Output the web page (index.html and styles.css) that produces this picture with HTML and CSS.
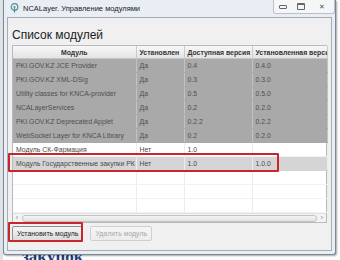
FILE: index.html
```html
<!DOCTYPE html>
<html lang="ru">
<head>
    <meta charset="UTF-8">
    <title>NCALayer. Управление модулями</title>
    <link rel="stylesheet" href="styles.css">
</head>
<body>
    <div class="desk">
        <div class="window">
            <div class="titlebar">
                <svg class="app-icon" width="9" height="10" viewBox="0 0 9 10">
                    <circle cx="4.5" cy="4" r="3.3" fill="none" stroke="#4f8f9a" stroke-width="1.2"/>
                    <circle cx="4.5" cy="4" r="1.1" fill="#4f8f9a"/>
                    <path d="M4.5 5 L4.5 9.5" stroke="#4f8f9a" stroke-width="1.2"/>
                </svg>
                <span class="title">NCALayer. Управление модулями</span>
                <div class="controls">
                    <span class="ctl ctl-min"></span>
                    <span class="ctl ctl-max"></span>
                    <span class="ctl ctl-close">&#x2715;</span>
                </div>
            </div>
            <div class="client">
                <h1>Список модулей</h1>
                <div class="grid">
                    <table>
                        <colgroup>
                            <col class="c1"><col class="c2"><col class="c3"><col class="c4">
                        </colgroup>
                        <thead>
                            <tr><th>Модуль</th><th>Установлен</th><th>Доступная версия</th><th>Установленная версия</th></tr>
                        </thead>
                        <tbody>
                            <tr class="sys"><td>PKI.GOV.KZ JCE Provider</td><td>Да</td><td>0.4</td><td>0.4.0</td></tr>
                            <tr class="sys"><td>PKI.GOV.KZ XML-DSig</td><td>Да</td><td>0.3</td><td>0.3.0</td></tr>
                            <tr class="sys"><td>Utility classes for KNCA-provider</td><td>Да</td><td>0.5</td><td>0.5.0</td></tr>
                            <tr class="sys"><td>NCALayerServices</td><td>Да</td><td>0.2</td><td>0.2.0</td></tr>
                            <tr class="sys"><td>PKI.GOV.KZ Deprecated Applet</td><td>Да</td><td>0.2.2</td><td>0.2.2</td></tr>
                            <tr class="sys"><td>WebSocket Layer for KNCA Library</td><td>Да</td><td>0.2</td><td>0.2.0</td></tr>
                            <tr><td>Модуль СК-Фармация</td><td>Нет</td><td>1.0</td><td></td></tr>
                            <tr class="selected"><td>Модуль Государственные закупки РК</td><td>Нет</td><td>1.0</td><td>1.0.0</td></tr>
                            <tr class="empty"><td></td><td></td><td></td><td></td></tr>
                            <tr class="empty"><td></td><td></td><td></td><td></td></tr>
                            <tr class="empty"><td></td><td></td><td></td><td></td></tr>
                        </tbody>
                    </table>
                    <div class="hscroll">
                        <span class="arrow">&lsaquo;</span>
                        <span class="thumb"></span>
                        <span class="arrow">&rsaquo;</span>
                    </div>
                </div>
                <div class="actions">
                    <button class="btn">Установить модуль</button>
                    <button class="btn" disabled>Удалить модуль</button>
                </div>
            </div>
        </div>
        <div class="under">закупок</div>

        <!-- red annotation frames -->
        <div class="mark mark-row"></div>
        <div class="mark mark-btn"></div>
    </div>
</body>
</html>
```

FILE: styles.css
```css
body {
    margin: 0;
    font-family: 'Liberation Sans', Arial, sans-serif;
    background: #ffffff;
}

.desk {
    position: relative;
    width: 340px;
    height: 260px;
    overflow: hidden;
    background: linear-gradient(to right, #dfe3e8 0, #dfe3e8 3px, #ffffff 3px);
}

.window {
    position: relative;
    z-index: 1;
    width: 331px;
    margin-left: 3px;
    border: 1px solid #7d8792;
    border-top: none;
    border-radius: 0 0 3px 3px;
    background: #e9eef4;
    box-shadow: 1px 1px 2px rgba(0, 0, 0, 0.35);
}

.titlebar {
    display: flex;
    align-items: center;
    height: 16px;
    padding-left: 6px;
}

.app-icon {
    margin-right: 4px;
}

.title {
    font-size: 7.5px;
    color: #222;
}

.controls {
    display: flex;
    align-items: center;
    margin-left: auto;
    height: 13px;
    align-self: flex-start;
    border: 1px solid #b8c0c8;
    border-top: none;
    border-radius: 0 0 3px 3px;
    background: #f4f6f8;
}

.ctl {
    display: flex;
    align-items: center;
    justify-content: center;
    width: 18px;
    height: 13px;
    color: #555;
    font-size: 7px;
}

.ctl-close {
    width: 24px;
}

.ctl-min::before {
    content: "";
    width: 6px;
    height: 2px;
    border: 1px solid #666;
    border-radius: 1px;
}

.ctl-max::before {
    content: "";
    width: 6px;
    height: 4px;
    border: 1px solid #666;
    border-top-width: 2px;
    border-radius: 1px;
}

.client {
    margin: 1px 3px 3px 3px;
    border: 1px solid #a4acb5;
    background: #f0f0f0;
    padding: 0 4px 9px 4px;
}

h1 {
    margin: 10px 0 3px 0;
    font-size: 12px;
    line-height: 14px;
    font-weight: normal;
    color: #222;
}

.grid {
    border: 1px solid #b9b9b9;
    background: #fff;
}

table {
    width: 314px;
    table-layout: fixed;
    border-collapse: collapse;
    font-size: 6.9px;
}

.c1 { width: 123px; }
.c2 { width: 48px; }
.c3 { width: 68px; }
.c4 { width: 75px; }

th {
    height: 12px;
    padding: 0 3px;
    font-weight: bold;
    color: #333;
    white-space: nowrap;
    overflow: hidden;
    text-overflow: clip;
    background: linear-gradient(#f7f7f7, #e4e4e4);
    border-right: 1px solid #c9c9c9;
    border-bottom: 1px solid #c4c4c4;
}

th:nth-child(2),
th:nth-child(4) {
    text-align: left;
}

td {
    height: 13px;
    padding: 0 3px;
    color: #4a4a4a;
    white-space: nowrap;
    overflow: hidden;
    border-right: 1px solid #ececec;
    border-bottom: 1px solid #f1f1f1;
}

tr.sys td {
    background: #a9a9a9;
    color: #4f4f4f;
    border-right-color: #c2c2c2;
    border-bottom-color: #a9a9a9;
}

tr.selected td {
    background: #d5d5d5;
    border-bottom-color: #d5d5d5;
}

.hscroll {
    display: flex;
    align-items: center;
    height: 8px;
    background: #f2f2f2;
    border-top: 1px solid #e2e2e2;
}

.arrow {
    width: 8px;
    text-align: center;
    font-size: 7px;
    line-height: 8px;
    color: #888;
}

.thumb {
    flex: 1;
    height: 5px;
    margin: 0 1px;
    border: 1px solid #c4c4c4;
    border-radius: 3px;
    background: linear-gradient(#f4f4f4, #e2e2e2);
}

.actions {
    display: flex;
    gap: 7px;
    padding-top: 3px;
}

.btn {
    height: 15px;
    padding: 0 4px;
    font-family: 'Liberation Sans', Arial, sans-serif;
    font-size: 6.9px;
    color: #222;
    border: 1px solid #8e8e8e;
    border-radius: 2px;
    background: linear-gradient(#f6f6f6, #dcdcdc);
}

.btn:disabled {
    color: #a8a8a8;
    border-color: #cfcfcf;
    background: linear-gradient(#f6f6f6, #ececec);
}

.under {
    margin: -8px 0 0 22px;
    font-family: 'Liberation Serif', 'Times New Roman', serif;
    font-size: 17px;
    font-weight: bold;
    line-height: 20px;
    color: #1d3f7c;
}

.mark {
    position: absolute;
    z-index: 2;
    border: 2px solid #c8262c;
    border-radius: 1px;
}

.mark-row {
    left: 8px;
    top: 153px;
    width: 267px;
    height: 15px;
}

.mark-btn {
    left: 8px;
    top: 222px;
    width: 71px;
    height: 16px;
}
```
